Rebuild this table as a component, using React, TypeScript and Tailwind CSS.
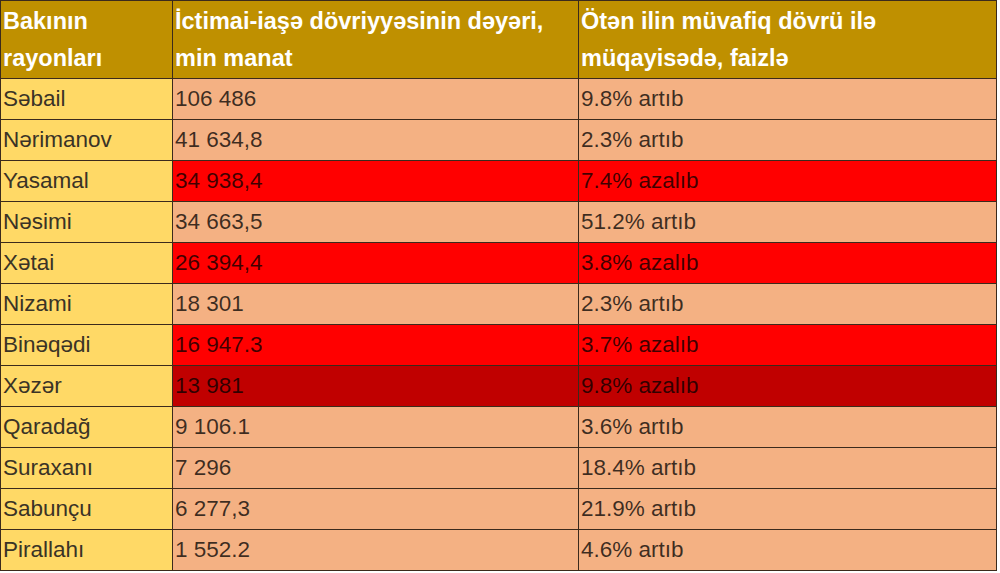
import React from 'react';

type Row = { district: string; value: string; change: string; tone?: 'red' | 'dark' };

const ROWS: Row[] = [
  { district: 'Səbail', value: '106 486', change: '9.8% artıb' },
  { district: 'Nərimanov', value: '41 634,8', change: '2.3% artıb' },
  { district: 'Yasamal', value: '34 938,4', change: '7.4% azalıb', tone: 'red' },
  { district: 'Nəsimi', value: '34 663,5', change: '51.2% artıb' },
  { district: 'Xətai', value: '26 394,4', change: '3.8% azalıb', tone: 'red' },
  { district: 'Nizami', value: '18 301', change: '2.3% artıb' },
  { district: 'Binəqədi', value: '16 947.3', change: '3.7% azalıb', tone: 'red' },
  { district: 'Xəzər', value: '13 981', change: '9.8% azalıb', tone: 'dark' },
  { district: 'Qaradağ', value: '9 106.1', change: '3.6% artıb' },
  { district: 'Suraxanı', value: '7 296', change: '18.4% artıb' },
  { district: 'Sabunçu', value: '6 277,3', change: '21.9% artıb' },
  { district: 'Pirallahı', value: '1 552.2', change: '4.6% artıb' },
];

const TONE_BG: Record<string, string> = {
  red: 'bg-[#ff0000]',
  dark: 'bg-[#c00000]',
  none: 'bg-[#f4b183]',
};

export default function App() {
  return (
    <div className="w-[1000px] h-[573px] bg-white overflow-hidden font-['Liberation_Sans',Arial,sans-serif]">
      <table className="w-[996px] border-collapse table-fixed">
        <colgroup>
          <col className="w-[172px]" />
          <col className="w-[406px]" />
          <col className="w-[418px]" />
        </colgroup>
        <thead>
          <tr className="bg-[#bf9000] text-white font-bold text-[23.5px] leading-[37px] h-[78px]">
            <th className="border border-[#3b2a1c] px-[2px] text-left align-middle font-bold">
              Bakının<br />rayonları
            </th>
            <th className="border border-[#3b2a1c] px-[2px] text-left align-middle font-bold">
              İctimai-iaşə dövriyyəsinin dəyəri,<br />min manat
            </th>
            <th className="border border-[#3b2a1c] px-[2px] text-left align-middle font-bold">
              Ötən ilin müvafiq dövrü ilə<br />müqayisədə, faizlə
            </th>
          </tr>
        </thead>
        <tbody>
          {ROWS.map(row => {
            const bg = TONE_BG[row.tone ?? 'none'];
            return (
              <tr key={row.district} className="h-[41px] text-[22.5px] leading-none text-black/75">
                <td className="border border-[#3b2a1c] bg-[#ffd966] px-[2px] text-[#3a3326]">{row.district}</td>
                <td className={`border border-[#3b2a1c] px-[2px] ${bg}`}>{row.value}</td>
                <td className={`border border-[#3b2a1c] px-[2px] ${bg}`}>{row.change}</td>
              </tr>
            );
          })}
        </tbody>
      </table>
    </div>
  );
}
